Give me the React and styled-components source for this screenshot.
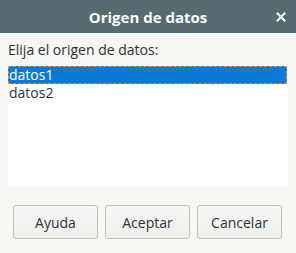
import React from "react";
import styled, { createGlobalStyle } from "styled-components";

const Global = createGlobalStyle`
  html, body { margin: 0; padding: 0; background: #f6f6f2; }
  body { font-family: "Open Sans", "Noto Sans", sans-serif; }
`;

const Dialog = styled.div`
  width: 296px;
  height: 253px;
  display: flex;
  flex-direction: column;
  background: #f6f6f2;
  color: #2e3436;
`;

const TitleBar = styled.div`
  height: 33px;
  background: #566a70;
  display: flex;
  align-items: center;
  justify-content: center;
  position: relative;
  color: #ffffff;
  font-weight: 700;
  font-size: 15px;
`;

const Close = styled.span`
  position: absolute;
  right: 10px;
  top: 12px;
  width: 10px;
  height: 10px;
  display: flex;
`;

const Body = styled.div`
  flex: 1;
  display: flex;
  flex-direction: column;
  padding: 7px 8px 14px 8px;
`;

const Label = styled.div`
  font-size: 14px;
  line-height: 19px;
  margin-bottom: 7px;
`;

const List = styled.div`
  background: #ffffff;
  height: 121px;
  display: flex;
  flex-direction: column;
`;

const Item = styled.div`
  height: 18px;
  line-height: 18px;
  font-size: 14px;
  padding-left: 1px;
  margin-right: 1px;
  box-sizing: border-box;
  background: ${p => (p.$selected ? "#0b7ad5" : "transparent")};
  color: ${p => (p.$selected ? "#ffffff" : "#2e3436")};
  outline: ${p => (p.$selected ? "1px dashed #f0892e" : "none")};
  outline-offset: -1px;
`;

const Buttons = styled.div`
  margin-top: 18px;
  display: flex;
  gap: 7px;
  padding-left: 5px;
`;

const Button = styled.button`
  width: 85px;
  height: 34px;
  box-sizing: border-box;
  border: 1px solid #c3c3bf;
  border-radius: 3px;
  background: linear-gradient(#f5f5f3, #eeeeeb);
  font-family: "Open Sans", "Noto Sans", sans-serif;
  font-size: 14px;
  color: #2e3436;
  padding: 0;
`;

export default function App() {
  return (
    <>
      <Global />
      <Dialog>
        <TitleBar>
          Origen de datos
          <Close>
            <svg width="10" height="10" viewBox="0 0 10 10">
              <path d="M1.5 1.5 L8.5 8.5 M8.5 1.5 L1.5 8.5" stroke="#fff" strokeWidth="2" strokeLinecap="square" />
            </svg>
          </Close>
        </TitleBar>
        <Body>
          <Label>Elija el origen de datos:</Label>
          <List>
            <Item $selected>datos1</Item>
            <Item>datos2</Item>
          </List>
          <Buttons>
            <Button>Ayuda</Button>
            <Button>Aceptar</Button>
            <Button>Cancelar</Button>
          </Buttons>
        </Body>
      </Dialog>
    </>
  );
}
